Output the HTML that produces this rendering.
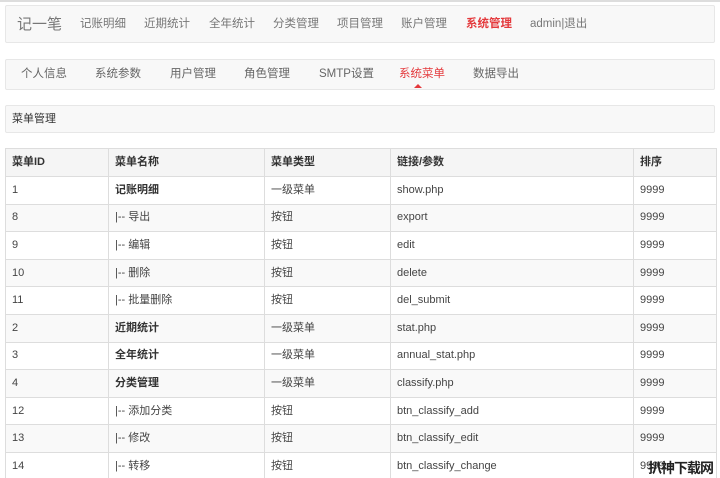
<!DOCTYPE html>
<html><head><meta charset="utf-8"><style>
*{margin:0;padding:0;box-sizing:border-box}
html,body{width:720px;height:478px;overflow:hidden}
body{background:#fff;font-family:"Liberation Sans","Noto Sans CJK SC",sans-serif;font-size:11px;color:#333;position:relative}
.topline{position:absolute;left:0;top:0;width:720px;height:2px;background:#ddd}
.box{position:absolute;left:5px;width:710px;background:#f8f8f8;border:1px solid #e7e7e7;border-radius:2px}
.t{position:absolute;white-space:nowrap;line-height:14px}
.nav .t{top:11px;color:#777;font-size:11.5px}
.sub .t{top:7px;color:#666;font-size:11.5px}
.red{color:#e4393c!important}
table{position:absolute;left:5px;top:148px;width:711px;border-collapse:collapse;table-layout:fixed}
td,th{border:1px solid #ddd;padding:0 6px;text-align:left;font-size:11px;line-height:13px;white-space:nowrap;overflow:hidden;vertical-align:middle}
td{color:#444}
tr{height:27.6px}
tr:first-child{height:28px}
th{background:#f5f5f5;font-weight:bold}
tr:nth-child(odd) td{background:#f9f9f9}
b{font-weight:bold;color:#333}
.wm{position:absolute;left:648px;top:460px;font-size:14px;line-height:16px;white-space:nowrap;color:#222;font-weight:bold;font-family:"Noto Sans CJK SC",sans-serif;letter-spacing:-1px}
</style></head><body>
<div class="topline"></div>
<div class="box nav" style="top:5px;height:38px">
<span class="t" style="left:11px;top:10px;font-size:15px;line-height:17px;color:#777">记一笔</span>
<span class="t" style="left:74px">记账明细</span>
<span class="t" style="left:138px">近期统计</span>
<span class="t" style="left:203px">全年统计</span>
<span class="t" style="left:267px">分类管理</span>
<span class="t" style="left:331px">项目管理</span>
<span class="t" style="left:395px">账户管理</span>
<span class="t red" style="left:460px;font-weight:bold">系统管理</span>
<span class="t" style="left:524px">admin|退出</span>
</div>
<div class="box sub" style="top:59px;height:31px">
<span class="t" style="left:15px">个人信息</span>
<span class="t" style="left:89px">系统参数</span>
<span class="t" style="left:164px">用户管理</span>
<span class="t" style="left:238px">角色管理</span>
<span class="t" style="left:313px">SMTP设置</span>
<span class="t red" style="left:393px">系统菜单</span>
<span class="t" style="left:467px">数据导出</span>
<div style="position:absolute;left:408px;top:24px;width:0;height:0;border-left:4px solid transparent;border-right:4px solid transparent;border-bottom:4px solid #e4393c"></div>
</div>
<div class="box" style="top:105px;height:28px"><span class="t" style="left:6px;top:6px;font-size:11px">菜单管理</span></div>
<table>
<colgroup><col style="width:103px"><col style="width:156px"><col style="width:126px"><col style="width:243px"><col style="width:83px"></colgroup>
<tr><th>菜单ID</th><th>菜单名称</th><th>菜单类型</th><th>链接/参数</th><th>排序</th></tr>
<tr><td>1</td><td><b>记账明细</b></td><td>一级菜单</td><td>show.php</td><td>9999</td></tr>
<tr><td>8</td><td>|-- 导出</td><td>按钮</td><td>export</td><td>9999</td></tr>
<tr><td>9</td><td>|-- 编辑</td><td>按钮</td><td>edit</td><td>9999</td></tr>
<tr><td>10</td><td>|-- 删除</td><td>按钮</td><td>delete</td><td>9999</td></tr>
<tr><td>11</td><td>|-- 批量删除</td><td>按钮</td><td>del_submit</td><td>9999</td></tr>
<tr><td>2</td><td><b>近期统计</b></td><td>一级菜单</td><td>stat.php</td><td>9999</td></tr>
<tr><td>3</td><td><b>全年统计</b></td><td>一级菜单</td><td>annual_stat.php</td><td>9999</td></tr>
<tr><td>4</td><td><b>分类管理</b></td><td>一级菜单</td><td>classify.php</td><td>9999</td></tr>
<tr><td>12</td><td>|-- 添加分类</td><td>按钮</td><td>btn_classify_add</td><td>9999</td></tr>
<tr><td>13</td><td>|-- 修改</td><td>按钮</td><td>btn_classify_edit</td><td>9999</td></tr>
<tr><td>14</td><td>|-- 转移</td><td>按钮</td><td>btn_classify_change</td><td>9999</td></tr>
</table>
<div class="wm">扒神下载网</div>
</body></html>
